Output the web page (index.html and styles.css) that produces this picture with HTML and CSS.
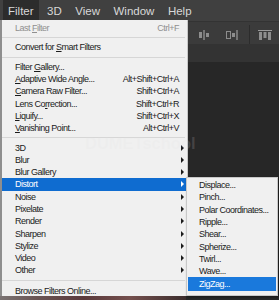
FILE: index.html
```html
<!DOCTYPE html>
<html lang="en">
<head>
    <meta charset="UTF-8">
    <meta name="viewport" content="width=device-width, initial-scale=1.0">
    <title>Filter menu</title>
    <link rel="stylesheet" href="styles.css">
</head>
<body>

    <div class="app">
        <div class="menubar">
            <span class="top-item active">Filter</span>
            <span class="top-item">3D</span>
            <span class="top-item">View</span>
            <span class="top-item">Window</span>
            <span class="top-item">Help</span>
        </div>

        <div class="optionsbar">
            <svg class="tool-icon first" width="12" height="10" viewBox="0 0 12 10">
                <rect x="1" y="2" width="3" height="6" fill="#8d8d8d"/>
                <rect x="5.5" y="0" width="1" height="10" fill="#b0b0b0"/>
                <rect x="8" y="3" width="3" height="4" fill="#8d8d8d"/>
            </svg>
            <svg class="tool-icon second" width="12" height="10" viewBox="0 0 12 10">
                <rect x="0.5" y="1.5" width="4" height="7" fill="none" stroke="#8d8d8d"/>
                <rect x="6" y="3" width="3" height="4" fill="#8d8d8d"/>
                <rect x="10.5" y="0" width="1" height="10" fill="#b0b0b0"/>
            </svg>
            <span class="divider"></span>
            <svg class="tool-icon third" width="14" height="10" viewBox="0 0 14 10">
                <rect x="0" y="0" width="14" height="1" fill="#9a9a9a"/>
                <rect x="1" y="2" width="3" height="8" fill="#8d8d8d"/>
                <rect x="5.5" y="2" width="3" height="6" fill="#8d8d8d"/>
                <rect x="10" y="2" width="3" height="8" fill="#8d8d8d"/>
            </svg>
        </div>

        <div class="tabbar"></div>

        <div class="workspace">
            <div class="photo-strip"></div>
        </div>

        <!-- menu Filter aberto -->
        <div class="menu main-menu">
            <div class="item disabled"><span>Last <u>F</u>ilter</span><span class="key">Ctrl+F</span></div>
            <div class="sep"></div>
            <div class="item"><span>Convert for <u>S</u>mart Filters</span></div>
            <div class="sep"></div>
            <div class="item"><span>Filter <u>G</u>allery...</span></div>
            <div class="item"><span><u>A</u>daptive Wide Angle...</span><span class="key">Alt+Shift+Ctrl+A</span></div>
            <div class="item"><span><u>C</u>amera Raw Filter...</span><span class="key">Shift+Ctrl+A</span></div>
            <div class="item"><span>Lens Co<u>r</u>rection...</span><span class="key">Shift+Ctrl+R</span></div>
            <div class="item"><span><u>L</u>iquify...</span><span class="key">Shift+Ctrl+X</span></div>
            <div class="item"><span><u>V</u>anishing Point...</span><span class="key">Alt+Ctrl+V</span></div>
            <div class="sep"></div>
            <div class="item sub"><span>3D</span><span class="arrow"></span></div>
            <div class="item sub"><span>Blur</span><span class="arrow"></span></div>
            <div class="item sub"><span>Blur Gallery</span><span class="arrow"></span></div>
            <div class="item sub selected"><span>Distort</span><span class="arrow"></span></div>
            <div class="item sub"><span>Noise</span><span class="arrow"></span></div>
            <div class="item sub"><span>Pixelate</span><span class="arrow"></span></div>
            <div class="item sub"><span>Render</span><span class="arrow"></span></div>
            <div class="item sub"><span>Sharpen</span><span class="arrow"></span></div>
            <div class="item sub"><span>Stylize</span><span class="arrow"></span></div>
            <div class="item sub"><span>Video</span><span class="arrow"></span></div>
            <div class="item sub"><span>Other</span><span class="arrow"></span></div>
            <div class="sep last"></div>
            <div class="item"><span>Browse Filters Online...</span></div>
        </div>

        <div class="menu sub-menu">
            <div class="item"><span>Displace...</span></div>
            <div class="item"><span>Pinch...</span></div>
            <div class="item"><span>Polar Coordinates...</span></div>
            <div class="item"><span>Ripple...</span></div>
            <div class="item"><span>Shear...</span></div>
            <div class="item"><span>Spherize...</span></div>
            <div class="item"><span>Twirl...</span></div>
            <div class="item"><span>Wave...</span></div>
            <div class="item selected"><span>ZigZag...</span></div>
        </div>

        <div class="watermark">DUMETschool</div>
    </div>

</body>
</html>
```

FILE: styles.css
```css
* {
    margin: 0;
    padding: 0;
    box-sizing: border-box;
}

body {
    font-family: "Liberation Sans", Arial, sans-serif;
    background: #272727;
    overflow: hidden;
}

.app {
    position: relative;
    width: 279px;
    height: 300px;
    display: flex;
    flex-direction: column;
    overflow: hidden;
}

/* barra de menus */
.menubar {
    height: 21px;
    background: #404040;
    display: flex;
    align-items: stretch;
    padding-left: 3px;
    gap: 3.5px;
}

.top-item {
    display: flex;
    align-items: center;
    padding: 0 5px;
    font-size: 11.5px;
    color: #d8d8d8;
}

.top-item.active {
    background: #2c2c2c;
}

.optionsbar {
    height: 23px;
    background: #3b3b3b;
    border-top: 1px solid #333;
    display: flex;
    align-items: center;
    justify-content: flex-end;
    padding: 4px 7px 0 0;
}

.tool-icon.second {
    margin-left: 16px;
}

.divider {
    width: 1px;
    height: 20px;
    background: #2c2c2c;
    margin: 0 8px 0 11px;
}

.tabbar {
    height: 18px;
    background: #333333;
}

.workspace {
    flex: 1;
    background: #272727;
    display: flex;
    flex-direction: column;
    justify-content: flex-end;
}

.photo-strip {
    width: 186px;
    height: 4px;
    background: linear-gradient(to right, #7b7473 0, #6a5554 20%, #5a3a3c 45%, #744f4d 70%, #3b2d2d 100%);
}

/* menus */
.menu {
    position: absolute;
    background: #f0f0f0;
    color: #1b1b1b;
    font-size: 9px;
    letter-spacing: -0.5px;
}

.main-menu {
    left: 0;
    top: 20px;
    width: 188px;
    height: 276px;
    border-left: 2px solid #8e8e8e;
    border-right: 1px solid #c8c8c8;
    padding-top: 2px;
}

.sub-menu {
    left: 186px;
    top: 177px;
    width: 92px;
    height: 119px;
    border: 1px solid #c8c8c8;
    padding-top: 1px;
    box-shadow: 1px 1px 2px rgba(0, 0, 0, 0.4);
}

.item {
    height: 12.3px;
    display: flex;
    align-items: center;
    padding: 0 8px 0 13px;
    white-space: nowrap;
}

.sub-menu .item {
    padding-left: 12px;
}

.item.sub {
    padding-right: 3px;
}

.item.disabled {
    color: #8f8f8f;
}

.item.selected {
    background: #0f6cd0;
    color: #fff;
}

.sub-menu .item.selected {
    height: 13.5px;
    margin: 0 1px;
    padding-left: 11px;
    background: #1a79dc;
}

u {
    text-decoration-thickness: 1px;
    text-underline-offset: 1px;
}

.key {
    margin-left: auto;
}

.arrow {
    margin-left: auto;
    width: 0;
    height: 0;
    border-left: 3px solid #1b1b1b;
    border-top: 3px solid transparent;
    border-bottom: 3px solid transparent;
}

.item.selected .arrow {
    border-left-color: #fff;
}

.sep {
    height: 1px;
    background: #d6d6d6;
    margin: 3px 2px 3px 0;
}

.sep.last {
    margin: 3.5px 2px 3.5px 0;
}

.watermark {
    position: absolute;
    left: 85px;
    top: 135px;
    font-size: 16.5px;
    line-height: 1;
    font-weight: bold;
    color: rgba(225, 225, 225, 0.16);
    pointer-events: none;
}
```
